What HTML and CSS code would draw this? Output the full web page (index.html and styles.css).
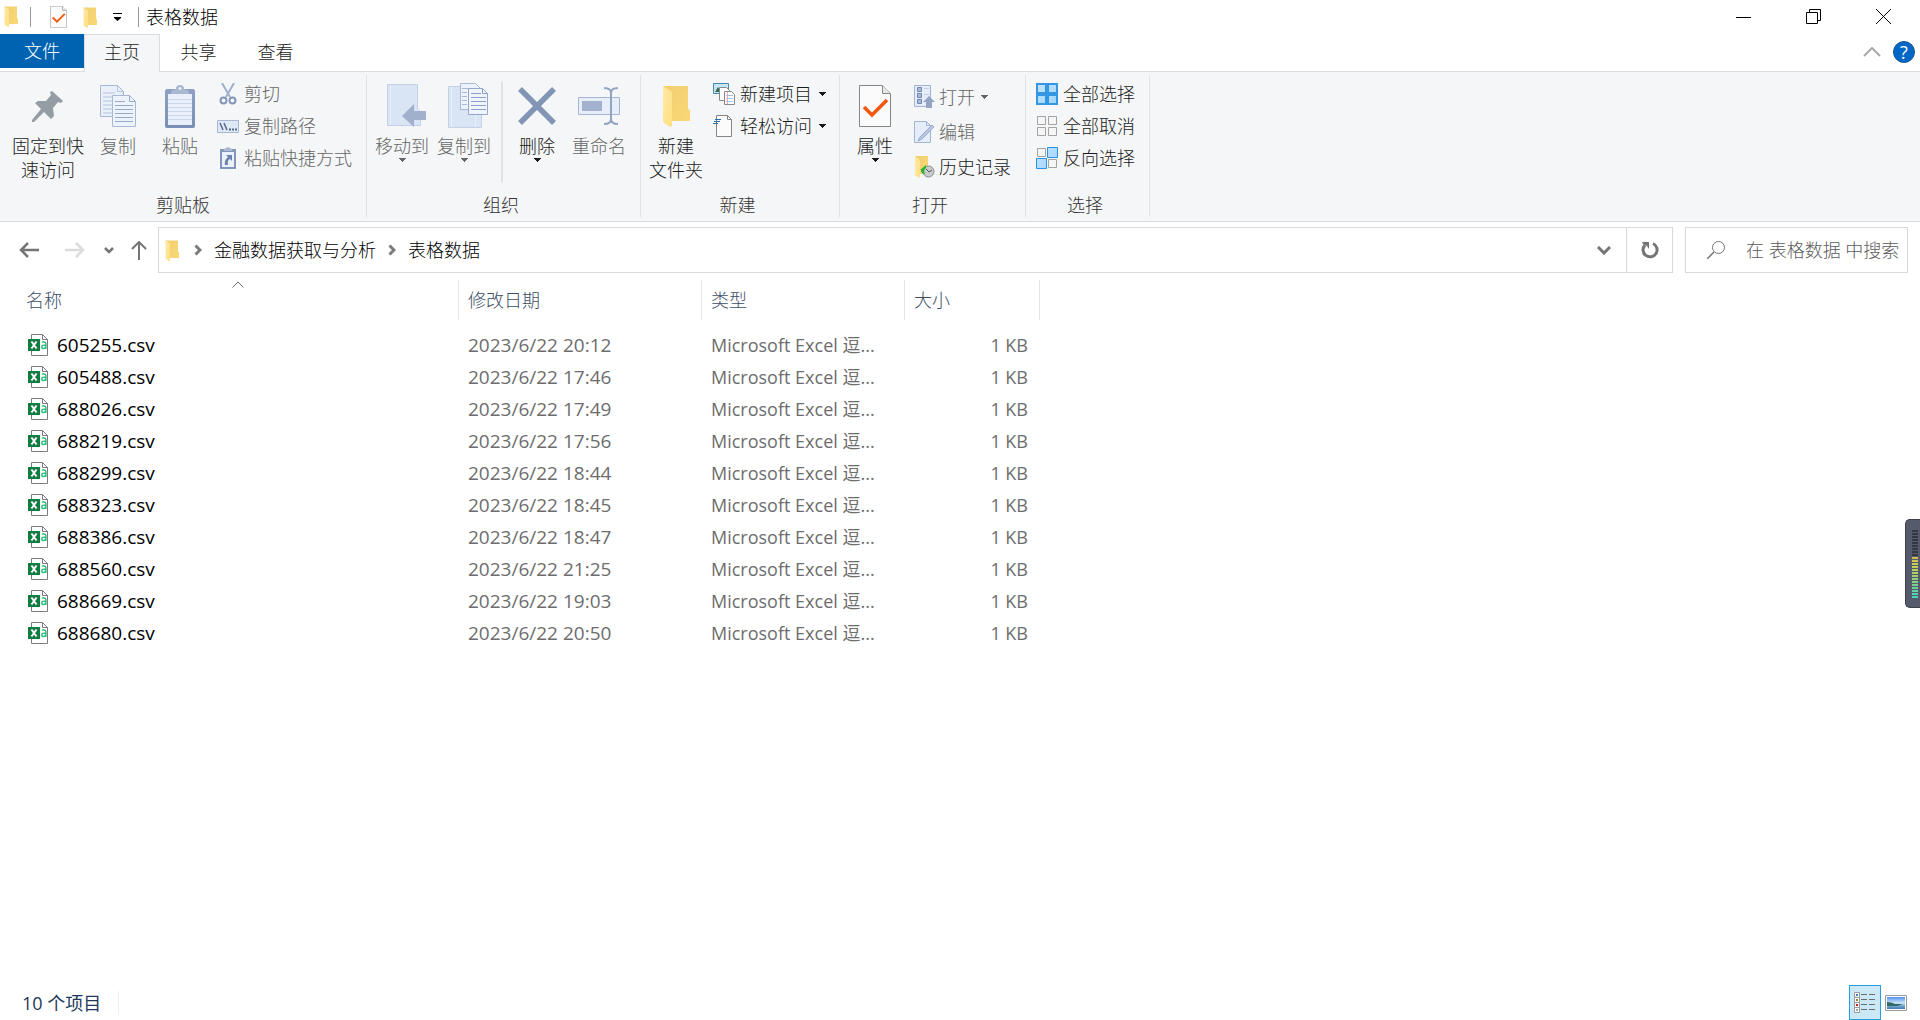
FILE: index.html
```html
<!DOCTYPE html>
<html lang="zh-CN">
<head>
<meta charset="utf-8">
<title>表格数据</title>
<link rel="stylesheet" href="styles.css">
</head>
<body>
<svg class="defs" aria-hidden="true">
  <defs>
    <linearGradient id="gFront" x1="0" y1="0" x2="1" y2="1"><stop offset="0" stop-color="#ffe9a6"/><stop offset="1" stop-color="#ffdf80"/></linearGradient>
    <linearGradient id="gBack" x1="0" y1="0" x2="1" y2="1"><stop offset="0" stop-color="#f0cf72"/><stop offset="1" stop-color="#fbd775"/></linearGradient>
    <linearGradient id="gBlue" x1="0" y1="0" x2="1" y2="1"><stop offset="0" stop-color="#c2e4ff"/><stop offset="1" stop-color="#9fd4ff"/></linearGradient>
    <linearGradient id="gClip" x1="0" y1="0" x2="0" y2="1"><stop offset="0" stop-color="#8ea0c4"/><stop offset="1" stop-color="#7b8eb6"/></linearGradient>
    <linearGradient id="gPhoto" x1="0" y1="0" x2="0" y2="1"><stop offset="0" stop-color="#4f8ff0"/><stop offset=".5" stop-color="#cfe6f7"/><stop offset=".7" stop-color="#7fb0d0"/><stop offset="1" stop-color="#3f78b0"/></linearGradient>
  </defs>
  <symbol id="folder" viewBox="0 0 28 42">
    <path d="M1 1h25v23l2 1v11H8z" fill="url(#gBack)"/>
    <path d="M1 1l9 6v34L8 42 1 37z" fill="url(#gFront)"/>
  </symbol>
  <symbol id="check-doc" viewBox="0 0 32 42">
    <path d="M.5.5h23l8 8v33H.5z" fill="#fbfbfc" stroke="#868686"/>
    <path d="M23.500.5v8h8" fill="#e8e8e8" stroke="#868686"/>
    <path d="M5 22l8 8 15-15" fill="none" stroke="#f2580d" stroke-width="3.600"/>
  </symbol>
  <symbol id="pages" viewBox="0 0 36 42">
    <path d="M.5.5h17l6 6v25H.5z" fill="#e9f0fa" stroke="#a7b7d4"/>
    <path d="M17.500.5v6h6M3 8h12M3 12h12M3 16h12M3 20h12M3 24h12M3 28h9" fill="none" stroke="#b5c3dc"/>
    <path d="M12.500 10.500h17l6 6v25h-23z" fill="#edf3fc" stroke="#a7b7d4"/>
    <path d="M29.500 10.500v6h6M15 16.500h10M15 20.500h18M15 24.500h18M15 28.500h18M15 32.500h18M15 36.500h18" fill="none" stroke="#98a9c8"/>
  </symbol>
  <symbol id="csv" viewBox="0 0 20 22">
    <path d="M3.500.5h11l5 5v16h-16z" fill="#fff" stroke="#7c7c7c"/>
    <path d="M14.500.5v5h5" fill="none" stroke="#7c7c7c"/>
    <path d="M14 8.500q1-.8 2.500-.6 1.400.3 1.400 2V15M17.700 11q-4 0-4 2 0 1.700 1.700 1.600 1.700-.1 2.300-1.500" fill="none" stroke="#2fc183" stroke-width="1.500"/>
    <path d="M0 5h12v12H0z" fill="#107c41"/>
    <path d="M3.500 7.500l5 7M8.500 7.500l-5 7" stroke="#fff" stroke-width="2"/>
  </symbol>
  <symbol id="down" viewBox="0 0 7 4"><path d="M0 0h7v1H6v1H5v1H4v1H3V3H2V2H1V1H0z" fill="currentColor"/></symbol>
  <symbol id="crumb" viewBox="0 0 8 12"><path d="M1.500 1.500L6 6l-4.500 4.500" fill="none" stroke="#7a7a7a" stroke-width="3"/></symbol>
</svg>

<div class="window">
  <header class="titlebar">
    <svg class="ico-folder" width="14" height="21"><use href="#folder"/></svg>
    <span class="bar"></span>
    <button class="quick" aria-label="属性"><svg width="17" height="22"><use href="#check-doc"/></svg></button>
    <button class="quick" aria-label="新建文件夹"><svg width="14" height="21"><use href="#folder"/></svg></button>
    <button class="quick narrow" aria-label="自定义快速访问工具栏"><svg width="9" height="9" viewBox="0 0 9 9"><path d="M0 0h9v1H0zM1 4h7v1L4.500 8 1 5z"/></svg></button>
    <span class="bar last"></span>
    <h1 class="title">表格数据</h1>
    <div class="controls">
      <button aria-label="最小化"><svg width="15" height="15"><path d="M0 8.500h15" stroke="#000"/></svg></button>
      <button aria-label="还原"><svg width="15" height="15"><path d="M.5 3.500h11v11H.5zM3.500 3.500v-3h11v11h-3" fill="none" stroke="#000"/></svg></button>
      <button aria-label="关闭"><svg width="15" height="15"><path d="M0 0l15 15M15 0L0 15" stroke="#000"/></svg></button>
    </div>
  </header>

  <nav class="tabs">
    <button class="tab file">文件</button>
    <button class="tab active">主页</button>
    <button class="tab">共享</button>
    <button class="tab">查看</button>
    <div class="tabs-end">
      <button aria-label="折叠功能区"><svg width="18" height="10"><path d="M1 9l8-8 8 8" fill="none" stroke="#a8a8a8" stroke-width="2"/></svg></button>
      <button class="help" aria-label="帮助">?</button>
    </div>
  </nav>

  <section class="ribbon">
    <div class="group g-clip">
      <div class="tools">
        <button class="big pin"><svg width="32" height="32" viewBox="0 0 32 32"><path d="M20 1l11 10-2 2-3-1-5 6 1 8-3 3-7-7L2 32H0v-2l9-11-6-6 3-2 8 0 5-6-1-3z" fill="#949da3"/></svg><span>固定到快<br>速访问</span></button>
        <button class="big" disabled><svg width="36" height="42"><use href="#pages"/></svg><span>复制</span></button>
        <button class="big" disabled><svg width="30" height="43" viewBox="0 0 30 43"><rect y="4" width="30" height="39" rx="2" fill="url(#gClip)"/><path d="M3 9h24v31H3z" fill="#e9f0fb"/><path d="M3 14.500h24M3 18.500h24M3 22.500h24M3 26.500h24M3 30.500h24M3 34.500h24" stroke="#cbd7ea"/><path d="M6 9V6l5-2q0-4 4-4t4 4l5 2v3z" fill="#a9b7d0"/><circle cx="15" cy="3.500" r="1.500" fill="#e9f0fb"/></svg><span>粘贴</span></button>
        <div class="stack">
          <button class="small" disabled><svg width="22" height="22" viewBox="0 0 22 22"><path d="M5 0l8 14M17 0L9 14" stroke="#9fb0cc" stroke-width="2"/><circle cx="6.500" cy="17.500" r="3" fill="none" stroke="#8496b8" stroke-width="2"/><circle cx="15.500" cy="17.500" r="3" fill="none" stroke="#8496b8" stroke-width="2"/></svg><span>剪切</span></button>
          <button class="small" disabled><svg width="22" height="13"><path d="M.5.500h21v12H.5z" fill="#dfe8f5" stroke="#a9b8d2"/><path d="M3 3l3 7M7 3l3 7" stroke="#566a90" stroke-width="1.500"/><path d="M12 8.500h2v2h-2zM15 8.500h2v2h-2zM18 8.500h2v2h-2z" fill="#566a90"/></svg><span>复制路径</span></button>
          <button class="small" disabled><svg width="22" height="22" viewBox="0 0 22 22"><path d="M3 2h16v20H3z" fill="#8395ba"/><path d="M5 5h12v15H5z" fill="#eaf1fb"/><path d="M7 4V2l4-2 4 2v2z" fill="#a9b7d0"/><path d="M9 8h6v6l-2-2q-3 1-2 6H8q-1-5 3-8z" fill="#6d82ad"/></svg><span>粘贴快捷方式</span></button>
        </div>
      </div>
      <div class="caption">剪贴板</div>
    </div>

    <div class="group g-org">
      <div class="tools">
        <button class="big wide-icon" disabled><svg width="42" height="44" viewBox="0 0 42 44"><path d="M2.500.5h30v25l3 2v14h-33z" fill="#d9e4f4" stroke="#c3d0e5"/><path d="M5.500 1v40" stroke="#e6eefa"/><path d="M17 32l12-12v7h12v9H29v7z" fill="#a1b0cc"/></svg><span>移动到</span><svg class="caret" width="7" height="4"><use href="#down"/></svg></button>
        <button class="big wide-icon" disabled><svg width="40" height="46" viewBox="0 0 40 46"><path d="M.5 3.500h30v24l3 2v15H.5z" fill="#d9e4f4" stroke="#c3d0e5"/><path d="M3.500 4v40M27.500 4v40" stroke="#e6eefa"/><path d="M12.500.5h15l5 5v21h-20z" fill="#edf3fc" stroke="#a7b7d4"/><path d="M14 5.500h9M14 9.500h5M14 13.500h5M14 17.500h5M14 21.500h5" stroke="#a7b7d4"/><path d="M20.500 5.500h14l5 5v21h-19z" fill="#f0f5fd" stroke="#94a6c8"/><path d="M34.500 5.500v5h5M23 10.500h10M23 14.500h15M23 18.500h15M23 22.500h15M23 26.500h15" fill="none" stroke="#8fa1c3"/></svg><span>复制到</span><svg class="caret" width="7" height="4"><use href="#down"/></svg></button>
        <span class="rule"></span>
        <button class="big"><svg width="38" height="38"><path d="M2 2l34 34M36 2L2 36" stroke="#8395b5" stroke-width="5.500"/></svg><span>删除</span><svg class="caret" width="7" height="4"><use href="#down"/></svg></button>
        <button class="big" disabled><svg width="42" height="38" viewBox="0 0 42 38"><path d="M.5 10.500h41v17H.5z" fill="#e6eefa" stroke="#a5b5d2"/><path d="M4 14h20v10H4z" fill="#a2b1cd"/><path d="M26 1q7 0 7 5v26q0 5-7 5M40 1q-7 0-7 5v26q0 5 7 5" fill="none" stroke="#93a4c2" stroke-width="2"/></svg><span>重命名</span></button>
      </div>
      <div class="caption">组织</div>
    </div>

    <div class="group g-new">
      <div class="tools">
        <button class="big"><svg width="28" height="42"><use href="#folder"/></svg><span>新建<br>文件夹</span></button>
        <div class="stack">
          <button class="small"><svg width="22" height="22" viewBox="0 0 22 22"><path d="M.5.500h15v10H.5z" fill="#c4e7f8" stroke="#4a86ad"/><path d="M2 9l3-5 3 5z" fill="#376b52"/><path d="M6.500 4.500h7l3 3v10h-10z" fill="#fff" stroke="#8a8a8a"/><path d="M11.500 8.500h7l3 3v10h-10z" fill="#fff" stroke="#8a8a8a"/><path d="M13 12.500h7M13 15.500h7M13 18.500h7" stroke="#9cc3ea"/><path d="M14.500 9v12" stroke="#f3a7a7"/></svg><span>新建项目</span><svg width="7" height="4"><use href="#down"/></svg></button>
          <button class="small"><svg width="22" height="22" viewBox="0 0 22 22"><path d="M3.500.5h11l4 4v17h-15z" fill="#fbfbfc" stroke="#868686"/><path d="M14.500.5v4h4" fill="none" stroke="#868686"/><path d="M2 4.500h6M1 6.500h6M0 8.500h5" stroke="#2a6eb0"/></svg><span>轻松访问</span><svg width="7" height="4"><use href="#down"/></svg></button>
        </div>
      </div>
      <div class="caption">新建</div>
    </div>

    <div class="group g-open">
      <div class="tools">
        <button class="big"><svg width="32" height="42"><use href="#check-doc"/></svg><span>属性</span><svg class="caret" width="7" height="4"><use href="#down"/></svg></button>
        <div class="stack tall">
          <button class="small" disabled><svg width="21" height="23" viewBox="0 0 21 23"><path d="M.5.500h16v21H.5z" fill="#e4edf9" stroke="#a3b3d0"/><path d="M3.500 2.500h4v4h-4zM3.500 8.500h4v4h-4zM3.500 14.500h4v4h-4z" fill="#a9bbdb" stroke="#7388b1"/><path d="M10 3.500h5M10 9.500h5" stroke="#c2cfe4"/><path d="M9 17l6-6 6 6h-3v6h-6v-6z" fill="#94a5c4"/></svg><span>打开</span><svg width="7" height="4"><use href="#down"/></svg></button>
          <button class="small" disabled><svg width="21" height="22" viewBox="0 0 21 22"><path d="M.5.500h12l4 4v17H.5z" fill="#e4edf9" stroke="#a3b3d0"/><path d="M12.500.5v4h4" fill="none" stroke="#a3b3d0"/><path d="M4 20l2-4L18 4l2 2L8 18z" fill="#b9c8e0" stroke="#9aabca"/></svg><span>编辑</span></button>
          <button class="small"><svg width="21" height="22" viewBox="0 0 21 22"><path d="M1 0h13v18H5z" fill="url(#gBack)"/><path d="M1 0l5 4v18l-5-3z" fill="url(#gFront)"/><circle cx="14.500" cy="15.500" r="5.500" fill="#c8cbcc" stroke="#878b8d"/><path d="M12 13l3 3 3-2" fill="none" stroke="#555"/><path d="M6 14l6-5v3q-3 2-1 6-4 0-4-4z" fill="#27b531"/></svg><span>历史记录</span></button>
        </div>
      </div>
      <div class="caption">打开</div>
    </div>

    <div class="group g-select">
      <div class="tools">
        <div class="stack">
          <button class="small"><svg width="22" height="22"><path d="M1 1h9v9H1zM12 1h9v9h-9zM1 12h9v9H1zM12 12h9v9h-9z" fill="url(#gBlue)" stroke="#3497e3" stroke-width="2"/></svg><span>全部选择</span></button>
          <button class="small"><svg width="22" height="22"><path d="M1.500 1.500h8v8h-8zM12.500 1.500h8v8h-8zM1.500 12.500h8v8h-8zM12.500 12.500h8v8h-8z" fill="#f6f6f6" stroke="#a3a3a3"/></svg><span>全部取消</span></button>
          <button class="small"><svg width="22" height="22"><path d="M1.500 1.500h8v8h-8zM12.500 12.500h8v8h-8z" fill="#f6f6f6" stroke="#a3a3a3"/><path d="M11.500.5h10v10h-10zM.5 11.500h10v10H.5z" fill="url(#gBlue)" stroke="#2b92e2"/></svg><span>反向选择</span></button>
        </div>
      </div>
      <div class="caption">选择</div>
    </div>
  </section>

  <section class="location">
    <div class="history">
      <button aria-label="后退"><svg width="20" height="16"><path d="M9 1L2 8l7 7M2 8h18" fill="none" stroke="#757575" stroke-width="2.500"/></svg></button>
      <button aria-label="前进" disabled><svg width="20" height="16"><path d="M11 1l7 7-7 7M18 8H0" fill="none" stroke="#dcdcdc" stroke-width="2.500"/></svg></button>
      <button class="recent" aria-label="最近浏览的位置"><svg width="10" height="7"><path d="M1 1l4 4 4-4" fill="none" stroke="#757575" stroke-width="2.500"/></svg></button>
      <button class="up" aria-label="上移"><svg width="16" height="19"><path d="M1 8l7-7 7 7M8 1v18" fill="none" stroke="#757575" stroke-width="2"/></svg></button>
    </div>
    <div class="address">
      <svg width="14" height="21"><use href="#folder"/></svg>
      <svg width="8" height="12"><use href="#crumb"/></svg>
      <a href="#">金融数据获取与分析</a>
      <svg width="8" height="12"><use href="#crumb"/></svg>
      <a href="#">表格数据</a>
      <button class="expand" aria-label="以前的位置"><svg width="14" height="9"><path d="M1 1l6 6 6-6" fill="none" stroke="#757575" stroke-width="3"/></svg></button>
      <button class="refresh" aria-label="刷新"><svg width="18" height="18" viewBox="0 0 18 18"><path d="M12 2.500A7 7 0 1 1 4 4" fill="none" stroke="#757575" stroke-width="3"/><path d="M1 1h7v7L6 5 2 3z" fill="#757575"/></svg></button>
    </div>
    <label class="search">
      <svg width="18" height="18"><circle cx="11.500" cy="6.500" r="6" fill="none" stroke="#757575"/><path d="M7 11l-7 7" stroke="#757575" stroke-width="1.500"/></svg>
      <input type="text" aria-label="搜索" placeholder="在 表格数据 中搜索">
    </label>
  </section>

  <main class="files">
    <table>
      <colgroup><col class="c-name"><col class="c-date"><col class="c-type"><col class="c-size"></colgroup>
      <thead><tr>
        <th scope="col">名称<svg class="sort" width="12" height="7"><path d="M.5 6.500L6 1l5.500 5.500" fill="none" stroke="#6b6b6b"/></svg></th>
        <th scope="col">修改日期</th><th scope="col">类型</th><th scope="col">大小</th>
      </tr></thead>
      <tbody>
        <tr><td><span class="name"><svg width="20" height="22"><use href="#csv"/></svg>605255.csv</span></td><td>2023/6/22 20:12</td><td class="type">Microsoft Excel 逗...</td><td class="size">1 KB</td></tr>
        <tr><td><span class="name"><svg width="20" height="22"><use href="#csv"/></svg>605488.csv</span></td><td>2023/6/22 17:46</td><td class="type">Microsoft Excel 逗...</td><td class="size">1 KB</td></tr>
        <tr><td><span class="name"><svg width="20" height="22"><use href="#csv"/></svg>688026.csv</span></td><td>2023/6/22 17:49</td><td class="type">Microsoft Excel 逗...</td><td class="size">1 KB</td></tr>
        <tr><td><span class="name"><svg width="20" height="22"><use href="#csv"/></svg>688219.csv</span></td><td>2023/6/22 17:56</td><td class="type">Microsoft Excel 逗...</td><td class="size">1 KB</td></tr>
        <tr><td><span class="name"><svg width="20" height="22"><use href="#csv"/></svg>688299.csv</span></td><td>2023/6/22 18:44</td><td class="type">Microsoft Excel 逗...</td><td class="size">1 KB</td></tr>
        <tr><td><span class="name"><svg width="20" height="22"><use href="#csv"/></svg>688323.csv</span></td><td>2023/6/22 18:45</td><td class="type">Microsoft Excel 逗...</td><td class="size">1 KB</td></tr>
        <tr><td><span class="name"><svg width="20" height="22"><use href="#csv"/></svg>688386.csv</span></td><td>2023/6/22 18:47</td><td class="type">Microsoft Excel 逗...</td><td class="size">1 KB</td></tr>
        <tr><td><span class="name"><svg width="20" height="22"><use href="#csv"/></svg>688560.csv</span></td><td>2023/6/22 21:25</td><td class="type">Microsoft Excel 逗...</td><td class="size">1 KB</td></tr>
        <tr><td><span class="name"><svg width="20" height="22"><use href="#csv"/></svg>688669.csv</span></td><td>2023/6/22 19:03</td><td class="type">Microsoft Excel 逗...</td><td class="size">1 KB</td></tr>
        <tr><td><span class="name"><svg width="20" height="22"><use href="#csv"/></svg>688680.csv</span></td><td>2023/6/22 20:50</td><td class="type">Microsoft Excel 逗...</td><td class="size">1 KB</td></tr>
      </tbody>
    </table>
  </main>

  <footer class="status">
    <span class="count">10 个项目</span>
    <div class="views">
      <button class="view on" aria-label="详细信息"><svg width="22" height="22" viewBox="0 0 22 22"><path d="M.5.500h5v5h-5zM.5 5.500h5v5h-5zM.5 10.500h5v5h-5zM.5 15.500h5v5h-5z" fill="#fff" stroke="#9a9a9a"/><path d="M2 2h2v2H2z" fill="#3a83c4"/><path d="M2 7h2v2H2z" fill="#8a8a2e"/><path d="M2 12h2v2H2z" fill="#c0261c"/><path d="M2 17h2v2H2z" fill="#8fae8f"/><path d="M7 2.500h6M15 2.500h6M7 7.500h6M15 7.500h6M7 12.500h6M15 12.500h6M7 17.500h6M15 17.500h6" stroke="#6c6c6c"/></svg></button>
      <button class="view" aria-label="大缩略图"><svg width="22" height="16"><path d="M.5.500h21v15H.5z" fill="#fff" stroke="#9a9a9a"/><path d="M2 2h18v12H2z" fill="url(#gPhoto)"/><path d="M2 7q5 0 8 2h8l-6 2H2z" fill="#2f6a63"/></svg></button>
    </div>
  </footer>

  <div class="meter" aria-hidden="true"><span class="meter-off"></span><span class="meter-on"></span></div>
</div>
</body>
</html>
```
FILE: styles.css
```css
* { box-sizing: border-box; }
body {
  margin: 0;
  background: #fff;
  color: #000;
  font: 300 18px/24px "Open Sans", "Noto Sans CJK SC", sans-serif;
}
button, input {
  margin: 0;
  padding: 0;
  border: 0;
  background: none;
  color: inherit;
  font: inherit;
}
svg { display: block; flex: none; }
.defs { position: absolute; width: 0; height: 0; }
.window { display: flex; flex-direction: column; min-height: 100vh; }

/* title bar */
.titlebar { display: flex; align-items: center; height: 34px; padding-left: 4px; }
.titlebar .ico-folder { margin-bottom: 2px; }
.bar { width: 1px; height: 20px; background: #999; margin: 0 7px 0 12px; }
.bar.last { margin: 0 7px 0 9px; }
.quick { display: flex; justify-content: center; width: 31px; }
.quick:first-of-type { margin-left: 5px; }
.quick.narrow { width: 24px; }
.title { margin: 0; font-size: 18px; font-weight: inherit; line-height: 24px; }
.controls { display: flex; margin-left: auto; padding: 0 2px 2px 0; }
.controls button { display: flex; justify-content: center; align-items: center; width: 70px; height: 32px; }

/* tabs */
.tabs { display: flex; height: 38px; border-bottom: 1px solid #dadbdc; color: #222; }
.tab { width: 77px; height: 36px; }
.tab.file { width: 84px; height: 34px; background: #0063b1; color: #fff; }
.tab.active { width: 76px; height: 38px; padding-bottom: 3px; border: 1px solid #dadbdc; border-bottom: 0; background: #f5f6f7; }
.tabs-end { display: flex; align-items: center; gap: 12px; margin-left: auto; padding: 0 5px 2px 0; }
.help { width: 22px; height: 22px; border: 1px solid #14528c; border-radius: 50%; background: #0067c8; color: #fff; font-weight: 400; line-height: 20px; }

/* ribbon */
.ribbon { display: flex; height: 150px; padding: 3px 0 4px; background: #f5f6f7; border-bottom: 1px solid #dadbdc; color: #1a1a1a; }
.group { display: flex; flex-direction: column; justify-content: space-between; padding: 0 4px; border-right: 1px solid #e1e2e3; }
.tools { display: flex; padding-top: 3px; }
.g-clip { width: 367px; }
.g-org { width: 274px; }
.g-new { width: 199px; }
.g-open { width: 186px; }
.g-select { width: 124px; }
.g-clip .tools { padding-left: 8px; }
.g-select .tools { padding-left: 6px; }
.caption { padding-right: 5px; color: #333; text-align: center; }
.g-clip .caption { padding-right: 0; }
.big { display: grid; grid-template-rows: 56px auto 6px; justify-items: center; align-content: start; width: 62px; white-space: nowrap; }
.big > svg:first-child { align-self: center; }
.big.pin { width: 72px; }
.big.pin + .big { margin-left: 3px; }
.big.wide-icon > svg:first-child { margin-left: 8px; }
.caret { width: 7px; height: 4px; }
.rule { width: 2px; height: 100px; margin: 4px 3px 0 6px; background: #e1e2e3; }
.stack { display: flex; flex-direction: column; margin-left: 6px; }
.stack.tall { margin-left: 8px; padding-top: 1px; }
.g-select .stack { margin-left: 0; }
.small { display: flex; align-items: center; gap: 5px; height: 32px; white-space: nowrap; }
.tall .small { gap: 4px; height: 35px; }
.small svg:last-child { margin-left: 2px; }
button:disabled { color: #666; }

/* location row */
.location { display: flex; gap: 12px; padding: 5px 12px 0 19px; }
.history { display: flex; align-items: center; width: 127px; }
.history button:nth-child(2) { margin-left: 26px; }
.history .recent { margin-left: 19px; }
.history .up { margin-left: 17px; }
.address { display: flex; flex: 1; align-items: center; gap: 12px; height: 46px; padding-left: 6px; border: 1px solid #d9d9d9; }
.address > svg:first-child { margin-right: 3px; }
.address a { color: #000; text-decoration: none; }
.expand { margin-left: auto; padding: 0 3px; }
.refresh { display: flex; align-items: center; justify-content: center; width: 46px; height: 44px; border-left: 1px solid #d9d9d9; }
.search { display: flex; align-items: center; gap: 21px; width: 223px; height: 46px; padding-left: 21px; border: 1px solid #d9d9d9; }
.search input { flex: 1; min-width: 0; outline: 0; }
.search input::placeholder { color: #5c5c5c; opacity: 1; }

/* file list */
.files { flex: 1; padding-top: 7px; }
table { width: 1040px; border-collapse: separate; border-spacing: 0; table-layout: fixed; }
.c-name { width: 459px; }
.c-date { width: 243px; }
.c-type { width: 203px; }
.c-size { width: 135px; }
th { position: relative; height: 40px; padding: 0 9px; border-right: 1px solid #e5e5e5; color: #3b4e68; font-weight: inherit; text-align: left; }
th:first-child { padding-left: 26px; }
.sort { position: absolute; top: 1px; left: 232px; }
tbody::before { content: ""; display: block; height: 9px; }
td { height: 32px; padding: 0 12px 0 9px; color: #6d6d6d; font-size: 19px; font-weight: 400; white-space: nowrap; }
td:first-child { padding-left: 28px; color: #000; }
td.type, td.size { font-size: 18px; }
td.size { text-align: right; }
.name { display: flex; align-items: center; gap: 9px; }

/* status bar */
.status { display: flex; align-items: center; height: 35px; padding: 0 13px 0 22px; color: #1e395b; }
.count { padding-right: 17px; border-right: 1px solid #f0f0f0; font-weight: 400; }
.views { display: flex; gap: 4px; margin-left: auto; }
.view { display: flex; align-items: center; justify-content: center; height: 35px; }
.view.on { width: 32px; border: 1px solid #26a0da; background: #cbe8f6; }

/* level meter docked on the right edge */
.meter { position: fixed; top: 519px; right: 0; width: 15px; height: 89px; padding: 10px 2px 0 6px; border: 1px solid #3c4049; border-right: 0; border-radius: 5px 0 0 5px; background: #555b6a; }
.meter span { display: block; }
.meter-off { height: 27px; background: repeating-linear-gradient(#343842 0 2px, #555b6a 2px 3px); }
.meter-on { height: 42px; background: repeating-linear-gradient(transparent 0 2px, #555b6a 2px 3px), linear-gradient(#d8b653, #c8cf55 20%, #8fcf7c 55%, #3fd6c4); }
```
